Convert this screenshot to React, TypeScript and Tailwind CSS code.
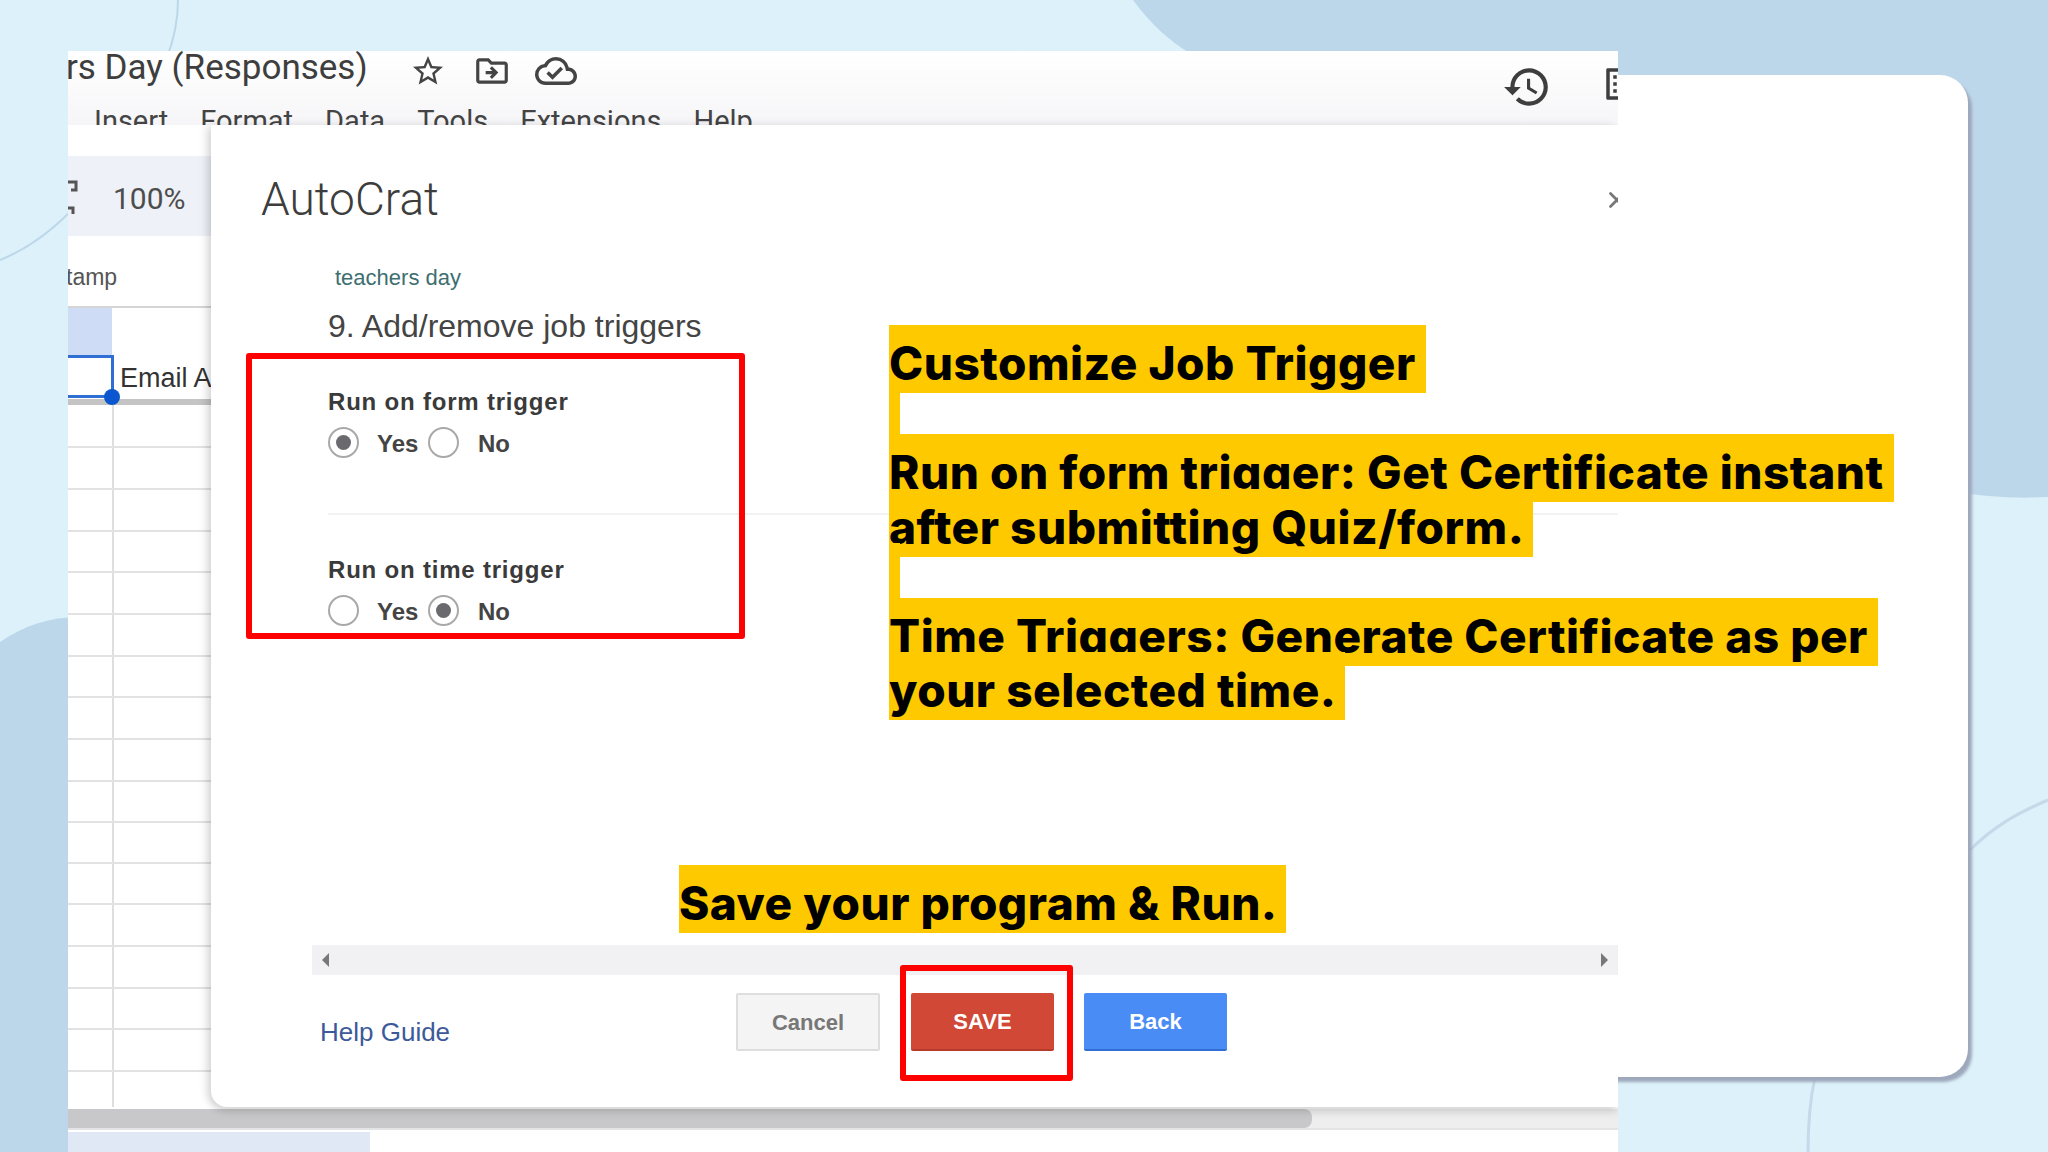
import { X } from 'lucide-react';
import { MdStarBorder, MdOutlineDriveFileMove, MdOutlineCloudDone, MdOutlineHistory, MdOutlineListAlt } from 'react-icons/md';

const gridRows = [446, 488, 530, 571, 613, 655, 696, 738, 780, 821, 862, 903, 945, 987, 1028, 1070];

const Radio = ({ on }: { on?: boolean }) => (
    <span className="w-[31px] h-[31px] rounded-full border-2 border-[#a9a9a9] bg-white flex items-center justify-center shrink-0">
        {on && <span className="w-[15px] h-[15px] rounded-full bg-[#6a6a6e]" />}
    </span>
);

const TriggerGroup = ({ label, yes }: { label: string; yes: boolean }) => (
    <div className="flex flex-col">
        <span className="text-[24px] leading-[28px] font-bold text-[#3a3a3a] tracking-[0.8px]">{label}</span>
        <div className="flex items-center mt-[10px] h-[32px] text-[24px] font-bold text-[#444]">
            <Radio on={yes} />
            <span className="ml-[18px] w-[51px] mt-[4px]">Yes</span>
            <Radio on={!yes} />
            <span className="ml-[19px] mt-[4px]">No</span>
        </div>
    </div>
);

const App = () => {
    return (
        <div className="relative w-[2048px] h-[1152px] overflow-hidden bg-[#dcf1f9] font-['Liberation_Sans',sans-serif]">
            {/* slide background */}
            <svg className="absolute inset-0" width="2048" height="1152" viewBox="0 0 2048 1152" fill="none">
                <path d="M1133 0 C1170 50 1210 70 1280 85 L1700 300 C1780 440 1900 505 2048 497 L2048 0 Z" fill="#bdd7ea" />
                <path d="M0 642 C25 625 50 617 80 617 L80 1152 L0 1152 Z" fill="#bdd7ea" />
                <path d="M178 0 C178 20 174 40 166 60" stroke="#bdd7ea" strokeWidth="2" />
                <path d="M70 212 C50 232 25 250 0 260" stroke="#bdd7ea" strokeWidth="2" />
                <path d="M1815 1077 C1810 1100 1808 1125 1808 1152" stroke="#c4d9ea" strokeWidth="3" />
                <path d="M1970 850 C1995 825 2020 812 2048 800" stroke="#c4d9ea" strokeWidth="3" />
            </svg>

            {/* white card behind the screenshot */}
            <div className="absolute left-[68px] top-[75px] w-[1900px] h-[1002px] bg-white rounded-[28px] shadow-[4px_5px_3px_#9ea8bc]" />

            {/* sheets screenshot */}
            <div className="absolute left-[68px] top-[51px] w-[1550px] h-[1101px] overflow-hidden bg-white flex flex-col">
                <div className="h-[74px] shrink-0 bg-gradient-to-b from-white to-[#f6f6f8] relative">
                    <div className="flex items-center h-[34px]">
                        <span className="ml-[-2px] text-[35px] leading-[36px] text-[#3e3e3e] font-['Roboto',sans-serif] whitespace-pre">rs Day (Responses)</span>
                        <span className="ml-[28px] mt-[6px] w-[64px] flex justify-center"><MdStarBorder className="text-[#444]" size={36} /></span>
                        <span className="mt-[6px] w-[64px] flex justify-center"><MdOutlineDriveFileMove className="text-[#444]" size={38} /></span>
                        <span className="mt-[6px] w-[64px] flex justify-center"><MdOutlineCloudDone className="text-[#444]" size={42} /></span>
                        <MdOutlineHistory className="ml-auto mt-[38px] text-[#3e3e3e] shrink-0" size={50} />
                        <MdOutlineListAlt className="ml-[49px] mr-[-25px] mt-[32px] text-[#3e3e3e] shrink-0" size={42} />
                    </div>
                    <div className="flex gap-[32px] pl-[26px] mt-[18px] text-[29px] leading-[36px] text-[#444] font-['Roboto',sans-serif]">
                        <span>Insert</span>
                        <span>Format</span>
                        <span>Data</span>
                        <span>Tools</span>
                        <span>Extensions</span>
                        <span>Help</span>
                    </div>
                </div>

                <div className="relative flex-1 flex flex-col">
                    <div className="h-[31px] shrink-0 bg-white" />
                    <div className="h-[80px] shrink-0 bg-[#eef1f8] flex items-center">
                        <svg className="shrink-0" width="10" height="36" viewBox="0 0 10 36" fill="none" stroke="#555" strokeWidth="3">
                            <path d="M0 4 H8 V12 H3" />
                            <path d="M0 30 H5 V36" />
                        </svg>
                        <span className="ml-[35px] mt-[4px] text-[30px] text-[#4d4d4d] font-['Roboto',sans-serif]">100%</span>
                    </div>
                    <div className="h-[72px] shrink-0 border-b-2 border-[#d5d5d5] flex items-center">
                        <span className="ml-[-2px] mt-[12px] text-[23px] text-[#555]">tamp</span>
                    </div>
                    <div className="flex h-[47px] shrink-0">
                        <div className="w-[44px] bg-[#cfdcf6]" />
                    </div>
                    <div className="relative flex h-[50px] shrink-0 border-b-[6px] border-[#c4c4c4]">
                        <div className="w-[46px] h-[43px] border-y-[3px] border-r-[3px] border-[#2f6fd3]" />
                        <span className="ml-[6px] text-[27px] leading-[46px] text-[#333]">Email A</span>
                        <span className="absolute left-[36px] top-[34px] w-[16px] h-[16px] rounded-full bg-[#0b57d0]" />
                    </div>
                    {/* grid */}
                    <div className="relative flex-1">
                        <div className="absolute left-[44px] top-0 h-[702px] w-[2px] bg-[#dedede]" />
                        {gridRows.map((y) => (
                            <div key={y} style={{ top: y - 405 }} className="absolute left-0 right-0 h-[2px] bg-[#e2e2e2]" />
                        ))}
                        <div className="absolute left-0 right-0 top-[704px] h-[19px] bg-[#eeeeef]">
                            <div className="w-[1244px] h-full bg-[#c8c8ca] rounded-r-[8px]" />
                        </div>
                        <div className="absolute left-0 right-0 top-[723px] h-[2px] bg-[#e4e4e6]" />
                        <div className="absolute left-0 top-[727px] w-[302px] h-[20px] bg-[#e0e8f5]" />
                    </div>

                    {/* autocrat dialog */}
                    <div className="absolute left-[143px] right-0 top-0 h-[982px] bg-white rounded-bl-[16px] shadow-[-5px_0_8px_rgba(0,0,0,0.1),0_5px_8px_rgba(0,0,0,0.12)] flex flex-col">
                        <div className="flex items-center justify-between h-[141px] pl-[50px] pb-[-8px] shrink-0">
                            <span className="mt-[8px] text-[46px] text-[#3d3d3d] font-['Roboto',sans-serif] font-light">AutoCrat</span>
                            <X className="mt-[8px] mr-[-12px] text-[#777]" size={26} strokeWidth={2.5} />
                        </div>
                        <span className="ml-[124px] text-[22px] leading-[24px] text-[#3d6e70]">teachers day</span>
                        <span className="ml-[117px] mt-[18px] text-[32px] leading-[36px] text-[#444]">9. Add/remove job triggers</span>
                        <div className="ml-[117px] mt-[44px]">
                            <TriggerGroup label="Run on form trigger" yes />
                        </div>
                        <div className="ml-[117px] mt-[55px] h-[2px] bg-[#f2f2f2]" />
                        <div className="ml-[117px] mt-[41px]">
                            <TriggerGroup label="Run on time trigger" yes={false} />
                        </div>
                        <div className="ml-[101px] mt-[319px] h-[30px] bg-[#f1f0f2] shrink-0 flex items-center justify-between px-[10px]">
                            <span className="w-0 h-0 border-y-[7px] border-y-transparent border-r-[7px] border-r-[#777]" />
                            <span className="w-0 h-0 border-y-[7px] border-y-transparent border-l-[7px] border-l-[#777]" />
                        </div>
                        <div className="flex items-start mt-[18px] ml-[109px]">
                            <span className="mt-[24px] w-[416px] text-[26px] leading-[30px] text-[#3c5a9a]">Help Guide</span>
                            <button className="w-[144px] h-[58px] bg-[#f4f4f4] border-2 border-[#dedede] rounded-[2px] text-[22px] font-bold text-[#777]">Cancel</button>
                            <button className="ml-[31px] w-[143px] h-[58px] bg-[#d14836] border-b-2 border-[#b53a2a] rounded-[2px] text-[22px] font-bold text-white">SAVE</button>
                            <button className="ml-[30px] w-[143px] h-[58px] bg-[#4a8cf5] border-b-2 border-[#2f6fd3] rounded-[2px] text-[22px] font-bold text-white">Back</button>
                        </div>
                    </div>
                </div>
            </div>

            {/* annotations */}
            <div className="absolute left-[246px] top-[353px] w-[499px] h-[286px] border-[6px] border-[#ff0000] rounded-[3px]" />
            <div className="absolute left-[900px] top-[965px] w-[173px] h-[116px] border-[6px] border-[#ff0000] rounded-[3px]" />

            <p className="absolute left-[889px] top-[336px] whitespace-pre text-[46px] leading-[54.5px] tracking-[0.5px] font-extrabold text-black font-['Inter',sans-serif]">
                <span className="bg-[#ffc900] pt-[10px] pb-[2px]">{'Customize Job Trigger \n \nRun on form trigger: Get Certificate instant \nafter submitting Quiz/form. \n \nTime Triggers: Generate Certificate as per \nyour selected time. '}</span>
            </p>
            <p className="absolute left-[679px] top-[876px] whitespace-pre text-[46px] leading-[54.5px] tracking-[0.5px] font-extrabold text-black font-['Inter',sans-serif]">
                <span className="bg-[#ffc900] pt-[10px] pb-[2px]">{'Save your program & Run. '}</span>
            </p>
        </div>
    );
};

export default App;
